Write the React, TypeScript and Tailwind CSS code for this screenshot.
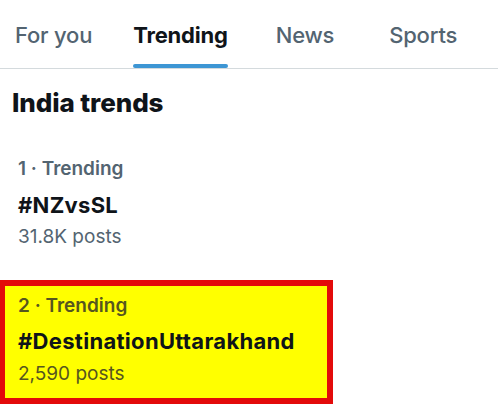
const tabs = [
  { label: "For you", active: false, cls: "ml-[15px]" },
  { label: "Trending", active: true, cls: "ml-[41px]" },
  { label: "News", active: false, cls: "ml-[48px]" },
  { label: "Sports", active: false, cls: "ml-[55px]" },
];

export default function App() {
  return (
    <div
      className="w-[498px] h-[417px] bg-white overflow-hidden"
      style={{ fontFamily: "Inter, 'Noto Sans', sans-serif" }}
    >
      <nav className="flex h-[69px] border-b border-[#d4dadd]">
        {tabs.map((t) => (
          <div key={t.label} className={`flex flex-col items-stretch ${t.cls}`}>
            <span
              className={`pt-[22px] text-[22px] leading-[26px] tracking-[-0.2px] ${
                t.active ? "font-bold text-[#0f1419]" : "font-medium text-[#536471]"
              }`}
            >
              {t.label}
            </span>
            {t.active && <div className="mt-[16px] h-[4px] rounded-full bg-[#3d96d4]" />}
          </div>
        ))}
      </nav>

      <h2 className="pl-[12px] pt-[18px] text-[26px] leading-[32px] font-extrabold text-[#0f1419] tracking-[-0.1px]">
        India trends
      </h2>

      <div className="pl-[18px] pt-[38px]">
        <p className="text-[19px] leading-[24px] font-semibold text-[#536471]">1 · Trending</p>
        <p className="mt-[12px] text-[22px] leading-[24px] font-bold text-[#0f1419] tracking-[0.3px]">#NZvsSL</p>
        <p className="mt-[8px] text-[19px] leading-[24px] text-[#536471]">31.8K posts</p>
      </div>

      <div className="mt-[31px] w-[333px] border-[6px] border-l-[5px] border-[#e30a0a] bg-[#ffff00] pl-[13px] pt-[8px] pb-[12px]">
        <p className="text-[19px] leading-[24px] font-semibold text-[#56561f]">2 · Trending</p>
        <p className="mt-[11px] text-[22px] leading-[24px] font-bold text-[#0f1419] tracking-[0.3px]">#DestinationUttarakhand</p>
        <p className="mt-[9px] text-[19px] leading-[24px] text-[#56561f]">2,590 posts</p>
      </div>
    </div>
  );
}
